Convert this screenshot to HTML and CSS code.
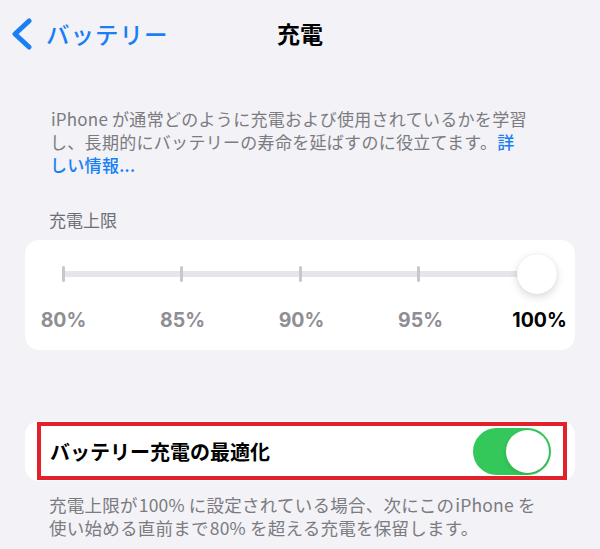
FILE: index.html
```html
<!DOCTYPE html>
<html lang="ja">
<head>
<meta charset="utf-8">
<title>充電</title>
<link rel="stylesheet" href="styles.css">
</head>
<body>
<div class="screen">
  <header class="nav">
    <a class="back" href="#">
      <svg class="chev" width="24" height="32" viewBox="0 0 24 32"><path d="M19 3 L5 16 L19 29" fill="none" stroke="#1a7ff5" stroke-width="5" stroke-linecap="round" stroke-linejoin="round"/></svg>
      <span class="back-text">バッテリー</span>
    </a>
    <h1 class="title">充電</h1>
  </header>

  <p class="desc"><span class="latin">iPhone</span>が通常どのように充電および使用されているかを学習<br>し、長期的にバッテリーの寿命を延ばすのに役立てます。<a class="link" href="#">詳<br>しい情報...</a></p>

  <div class="section-label">充電上限</div>
  <div class="card slider-card">
    <div class="track-wrap">
      <div class="track"></div>
      <div class="ticks">
        <span class="tick"></span><span class="tick"></span><span class="tick"></span><span class="tick"></span><span class="tick hidden"></span>
      </div>
      <div class="knob"></div>
    </div>
    <div class="labels">
      <span class="lbl">80%</span><span class="lbl">85%</span><span class="lbl">90%</span><span class="lbl">95%</span><span class="lbl sel">100%</span>
    </div>
  </div>

  <div class="card row-card">
    <span class="row-text">バッテリー充電の最適化</span>
    <span class="toggle"><span class="toggle-knob"></span></span>
    <span class="highlight"></span>
  </div>
  <p class="footer">充電上限が<span class="latin">100%</span>に設定されている場合、次にこの<span class="latin">iPhone</span>を<br>使い始める直前まで<span class="latin">80%</span>を超える充電を保留します。</p>
</div>
</body>
</html>
```
FILE: styles.css
```css
html, body {
  margin: 0;
  padding: 0;
  background: #f2f2f7;
}
body {
  font-family: "Noto Sans CJK JP", "Noto Sans", sans-serif;
  width: 600px;
  height: 549px;
  overflow: hidden;
}
.screen {
  display: flex;
  flex-direction: column;
}
.nav {
  position: relative;
  height: 66px;
  display: flex;
  align-items: center;
  justify-content: center;
}
.back {
  position: absolute;
  left: 10px;
  top: 18px;
  display: flex;
  align-items: center;
  gap: 12px;
  text-decoration: none;
  color: #1a7ff5;
}
.chev { display: block; }
.back-text {
  font-size: 23.5px;
  line-height: 32px;
  font-weight: 500;
  letter-spacing: 1px;
}
.title {
  margin: 0;
  font-size: 23px;
  font-weight: 700;
  color: #000;
  line-height: 32px;
}
.desc {
  margin: 41px 0 0 50px;
  font-size: 17px;
  line-height: 23px;
  color: #7b7b80;
  letter-spacing: 0.3px;
}
.latin {
  margin: 0 4px 0 1px;
  letter-spacing: 0.2px;
}
.link {
  color: #1a7ff5;
  text-decoration: none;
  font-weight: 500;
}
.section-label {
  margin: 32px 0 0 49px;
  font-size: 17px;
  line-height: 23px;
  color: #6d6d72;
}
.card {
  background: #fff;
  border-radius: 14px;
  margin: 0 25px;
}
.slider-card {
  margin-top: 9px;
  height: 110px;
  box-sizing: border-box;
  padding-top: 14px;
}
.track-wrap {
  position: relative;
  height: 40px;
  margin: 0 18px 0 38px;
}
.track {
  position: absolute;
  left: 0;
  right: 20px;
  top: 17px;
  height: 6px;
  background: #e5e5ea;
  border-radius: 3px;
}
.ticks {
  position: absolute;
  left: -1px;
  right: 19px;
  top: 12px;
  display: flex;
  justify-content: space-between;
}
.tick {
  width: 3px;
  height: 16px;
  border-radius: 2px;
  background: #c7c7cc;
}
.tick.hidden { visibility: hidden; }
.knob {
  position: absolute;
  right: 0;
  top: 0;
  width: 40px;
  height: 40px;
  border-radius: 50%;
  background: #fff;
  box-shadow: 0 3px 8px rgba(0,0,0,0.15), 0 0 1px rgba(0,0,0,0.12);
}
.labels {
  display: grid;
  grid-template-columns: repeat(5, 119px);
  margin: 14px 0 0 -21px;
  justify-items: center;
}
.lbl {
  font-family: Inter, "Liberation Sans", sans-serif;
  font-weight: 700;
  font-size: 19.5px;
  line-height: 24px;
  color: #8e8e93;
}
.lbl.sel { color: #000; }
.row-card {
  position: relative;
  margin-top: 71px;
  height: 60px;
  display: flex;
  align-items: center;
  justify-content: space-between;
  padding: 0 24px 0 25px;
}
.row-text {
  font-size: 20px;
  font-weight: 700;
  color: #000;
}
.toggle {
  width: 78px;
  height: 47px;
  border-radius: 24px;
  background: #34c759;
  display: flex;
  align-items: center;
  justify-content: flex-end;
  padding-right: 2px;
  box-sizing: border-box;
}
.toggle-knob {
  width: 43px;
  height: 43px;
  border-radius: 50%;
  background: #fff;
  box-shadow: 0 2px 4px rgba(0,0,0,0.12);
}
.highlight {
  position: absolute;
  left: 12px;
  right: 8px;
  top: 1px;
  bottom: 1px;
  border: 4px solid #e3212b;
  pointer-events: none;
}
.footer {
  margin: 12px 0 0 49px;
  font-size: 17.5px;
  line-height: 23px;
  color: #7b7b80;
  letter-spacing: 0.25px;
}
```
